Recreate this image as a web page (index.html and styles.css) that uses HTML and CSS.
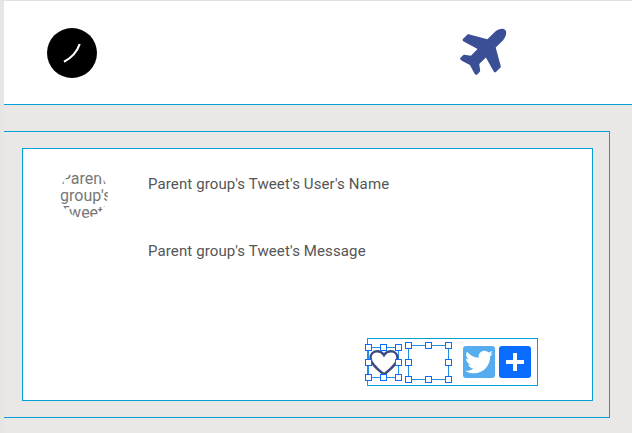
FILE: index.html
```html
<!DOCTYPE html>
<html lang="en">
<head>
<meta charset="utf-8">
<title>Tweet</title>
<link rel="stylesheet" href="styles.css">
</head>
<body>
<div class="page">
  <header class="top">
    <div class="logo">
      <svg viewBox="0 0 50 50" width="50" height="50"><path d="M32.7 16 C30 24 25 29.5 17 33.7" class="logo-stroke"/></svg>
    </div>
    <svg class="plane" viewBox="0 0 576 512" width="53" height="47"><path d="M480 192H365.71L260.61 8.06A16.014 16.014 0 0 0 246.71 0h-65.5c-10.63 0-18.3 10.17-15.38 20.39L214.86 192H112l-43.2-57.6c-3.02-4.03-7.77-6.4-12.8-6.4H16.01C5.6 128-2.04 137.78.49 147.88L32 256 .49 364.12C-2.04 374.22 5.6 384 16.01 384H56c5.04 0 9.78-2.37 12.8-6.4L112 320h102.86l-49.03 171.6c-2.92 10.22 4.75 20.4 15.38 20.4h65.5c5.74 0 11.04-3.08 13.89-8.06L365.71 320H480c35.35 0 96-28.65 96-64s-60.65-64-96-64z"/></svg>
  </header>
  <div class="band"></div>
  <main class="panel">
    <section class="card">
      <div class="card-main">
        <div class="avatar">Parent group's Tweet's</div>
        <div class="texts">
          <p class="line">Parent group's Tweet's User's Name</p>
          <p class="line">Parent group's Tweet's Message</p>
        </div>
      </div>
      <div class="actions">
        <div class="sel sel-heart">
          <svg class="heart" viewBox="0 0 32 28" width="32" height="28"><path d="M16 25.5 C10 20.5 2.5 15 2.5 8.8 C2.5 4.8 5.6 2.2 9 2.2 C12 2.2 14.6 3.8 16 6.2 C17.4 3.8 20 2.2 23 2.2 C26.4 2.2 29.5 4.8 29.5 8.8 C29.5 15 22 20.5 16 25.5 Z"/></svg>
          <i class="h tl"></i><i class="h tc"></i><i class="h tr"></i><i class="h ml"></i><i class="h mr"></i><i class="h bl"></i><i class="h bc"></i><i class="h br"></i>
        </div>
        <div class="sel sel-empty">
          <i class="h tl"></i><i class="h tc"></i><i class="h tr"></i><i class="h ml"></i><i class="h mr"></i><i class="h bl"></i><i class="h bc"></i><i class="h br"></i>
        </div>
        <div class="btn btn-twitter">
          <svg viewBox="0 0 512 512" width="28" height="28"><path d="M459.37 151.716c.325 4.548.325 9.097.325 13.645 0 138.72-105.583 298.558-298.558 298.558-59.452 0-114.68-17.219-161.137-47.106 8.447.974 16.568 1.299 25.34 1.299 49.055 0 94.213-16.568 130.274-44.832-46.132-.975-84.792-31.188-98.112-72.772 6.498.974 12.995 1.624 19.818 1.624 9.421 0 18.843-1.3 27.614-3.573-48.081-9.747-84.143-51.98-84.143-102.985v-1.299c13.969 7.797 30.214 12.67 47.431 13.319-28.264-18.843-46.781-51.005-46.781-87.391 0-19.492 5.197-37.36 14.294-52.954 51.655 63.675 129.3 105.258 216.365 109.807-1.624-7.797-2.599-15.918-2.599-24.04 0-57.828 46.782-104.934 104.934-104.934 30.213 0 57.502 12.67 76.67 33.137 23.715-4.548 46.456-13.32 66.599-25.34-7.798 24.366-24.366 44.833-46.132 57.827 21.117-2.273 41.584-8.122 60.426-16.243-14.292 20.791-32.161 39.308-52.628 54.253z"/></svg>
        </div>
        <div class="btn btn-plus">
          <svg viewBox="0 0 18 18" width="18" height="18"><path d="M7 0h4v7h7v4h-7v7H7v-7H0V7h7z"/></svg>
        </div>
      </div>
    </section>
  </main>
</div>
</body>
</html>
```
FILE: styles.css
```css
* { box-sizing: border-box; }
html, body { margin: 0; padding: 0; }
body {
  width: 632px;
  height: 433px;
  overflow: hidden;
  background: #e9e8e6;
  font-family: Roboto, "Liberation Sans", sans-serif;
}
.page {
  height: 433px;
  border-left: 4px solid #e6e6e6;
  border-top: 1px solid #e0e0e0;
  display: flex;
  flex-direction: column;
}
.top {
  height: 104px;
  flex: none;
  background: #fff;
  border-bottom: 1px solid #00a0d8;
  display: flex;
  align-items: flex-start;
  padding: 27px 0 0 43px;
}
.logo {
  width: 50px;
  height: 50px;
  border-radius: 50%;
  background: #000;
}
.logo-stroke {
  fill: none;
  stroke: #fff;
  stroke-width: 2.2;
}
.plane {
  margin: -3px 0 0 363px;
  fill: #3a4f96;
  transform: rotate(-45deg);
}
.band {
  height: 26px;
  flex: none;
}
.panel {
  width: 606px;
  height: 287px;
  flex: none;
  border-top: 1px solid #00a0d8;
  border-right: 1px solid #00a0d8;
  border-bottom: 1px solid #00a0d8;
  padding: 16px 0 0 18px;
}
.card {
  width: 571px;
  height: 253px;
  background: #fff;
  border: 1px solid #00a0d8;
  display: flex;
  flex-direction: column;
  padding: 23px 54px 14px 37px;
}
.card-main {
  display: flex;
  flex: 1;
  gap: 40px;
}
.avatar {
  width: 48px;
  height: 48px;
  flex: none;
  margin-top: -2px;
  border-radius: 50%;
  overflow: hidden;
  text-align: center;
  color: #777;
  font-size: 16px;
  line-height: 17px;
}
.texts {
  display: flex;
  flex-direction: column;
  gap: 50px;
  margin-top: 4px;
}
.line {
  margin: 0;
  font-size: 15px;
  line-height: 17px;
  color: #555;
  letter-spacing: 0.12px;
}
.actions {
  align-self: flex-end;
  width: 171px;
  height: 48px;
  border: 1px solid #00a0d8;
  display: flex;
  align-items: center;
  position: relative;
}
.sel {
  position: relative;
  flex: none;
  border: 1px solid #1f8fe8;
}
.sel-heart {
  width: 31px;
  height: 31px;
}
.sel-empty {
  width: 41px;
  height: 35px;
  margin-left: 9px;
}
.heart {
  position: absolute;
  left: -1px;
  top: 1px;
  fill: #fff;
  stroke: #3d4c82;
  stroke-width: 2.4;
}
.h {
  position: absolute;
  width: 7px;
  height: 7px;
  background: #fff;
  border: 1px solid #0a6cff;
}
.tl, .tc, .tr { top: -4px; }
.ml, .mr { top: calc(50% - 3.5px); }
.bl, .bc, .br { bottom: -4px; }
.tl, .ml, .bl { left: -4px; }
.tc, .bc { left: calc(50% - 3.5px); }
.tr, .mr, .br { right: -4px; }
.btn {
  width: 32px;
  height: 32px;
  flex: none;
  border-radius: 3px;
  display: flex;
  align-items: center;
  justify-content: center;
  fill: #fff;
}
.btn-twitter {
  background: #55acee;
  margin-left: 14px;
}
.btn-plus {
  background: #0a6cff;
  margin-left: 4px;
}
```
